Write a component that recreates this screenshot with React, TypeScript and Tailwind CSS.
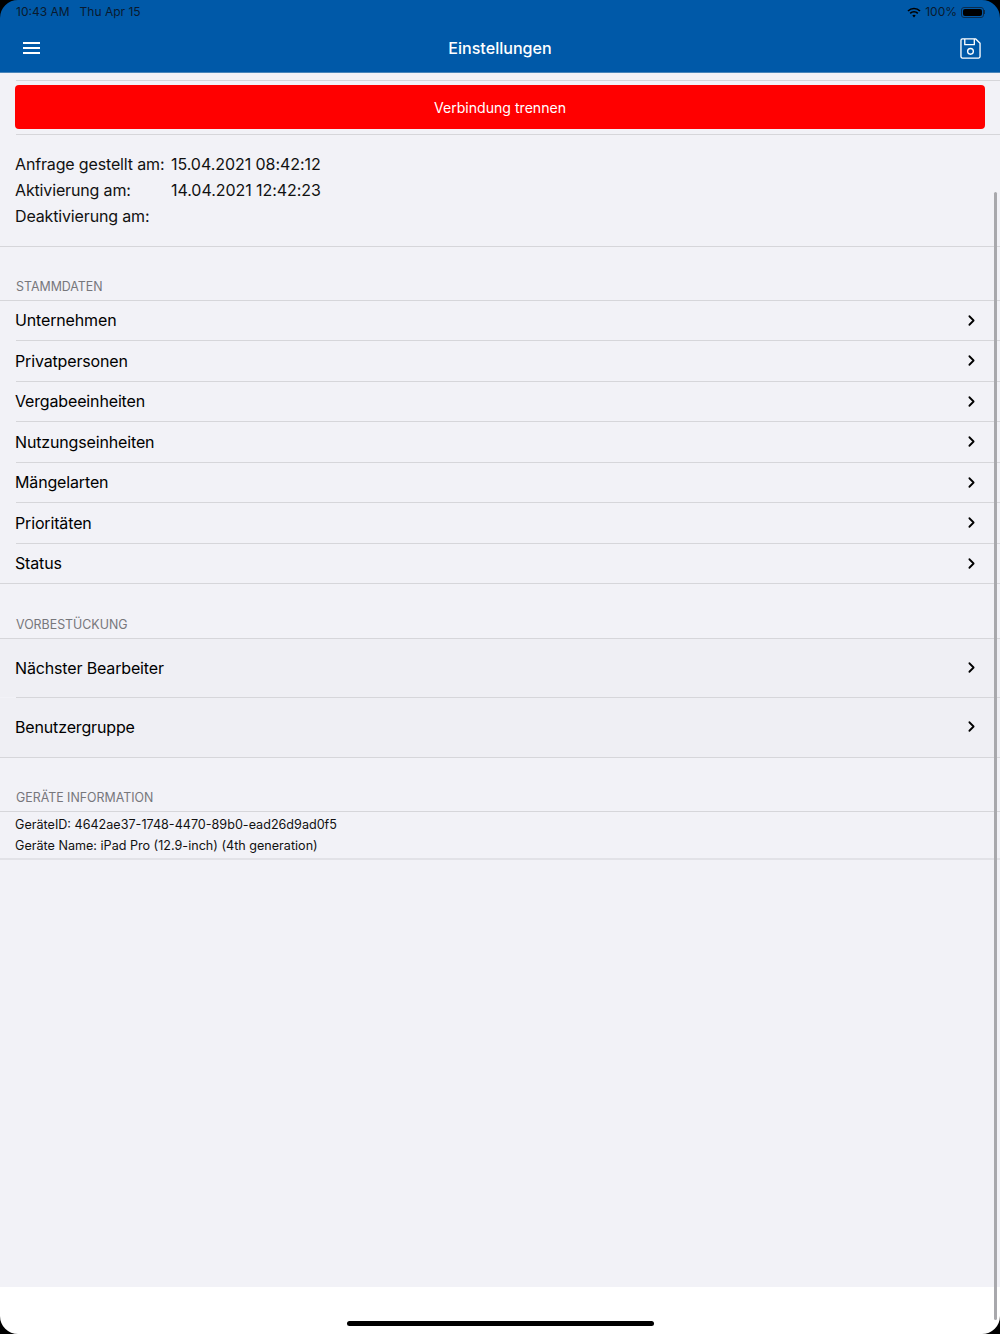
import { ChevronRight } from 'lucide-react';

const stammdaten = ['Unternehmen', 'Privatpersonen', 'Vergabeeinheiten', 'Nutzungseinheiten', 'Mängelarten', 'Prioritäten', 'Status'];

function SectionTitle({ title, tall }: { title: string; tall?: boolean }) {
  return (
    <div className={tall ? 'h-[55px] border-b border-[#d6d6da] pl-4 pt-[33px] text-[12.4px] leading-[15px] text-[#77777c]' : 'h-[54px] border-b border-[#d6d6da] pl-4 pt-[32px] text-[12.4px] leading-[15px] text-[#77777c]'}>
      {title}
    </div>
  );
}

function Row({ label, last }: { label: string; last?: boolean }) {
  return (
    <>
      <div className="flex h-[39.5px] items-center justify-between pl-[15px] pr-[20px] text-[16px] tracking-[-0.15px] text-black">
        <span>{label}</span>
        <ChevronRight size={17} strokeWidth={2.5} />
      </div>
      <div className={last ? 'border-t border-[#d6d6da]' : 'ml-4 border-t border-[#d6d6da]'} />
    </>
  );
}

function LargeRow({ label, last }: { label: string; last?: boolean }) {
  return (
    <div className={last ? 'flex h-[59.500px] items-center justify-between bg-[#efeff4] pb-px pl-[15px] pr-[20px] text-[16px] tracking-[-0.15px] text-black' : 'flex h-[57.500px] items-center justify-between bg-[#efeff4] pl-[15px] pr-[20px] text-[16px] tracking-[-0.15px] text-black'}>
      <span>{label}</span>
      <ChevronRight size={17} strokeWidth={2.5} />
    </div>
  );
}

export default function App() {
  return (
    <div className="relative flex h-[1334px] w-[1000px] flex-col overflow-hidden bg-white font-['Inter',sans-serif]">
      <header className="h-[73px] shrink-0 border-b border-[#4a86bb] bg-[#0059a8] text-white">
        <div className="flex h-[24px] items-center justify-between pl-4 pr-[15px] text-[12px] text-[#0a1a2e]">
          <div className="flex gap-[10px]">
            <span>10:43 AM</span>
            <span>Thu Apr 15</span>
          </div>
          <div className="flex items-center gap-[4px]">
            <svg width="14" height="11" viewBox="0 0 14 11" fill="none" stroke="#000" strokeWidth="1.7">
              <path d="M1 4a8.500 8.500 0 0 1 12 0" />
              <path d="M3.200 6.300a5.400 5.400 0 0 1 7.600 0" />
              <path d="M7 10.500 5.300 8.600a2.400 2.400 0 0 1 3.400 0Z" fill="#000" stroke="none" />
            </svg>
            <span>100%</span>
            <div className="flex items-center">
              <div className="h-[11px] w-[23px] rounded-[3px] border border-[#0b2c4d] p-px">
                <div className="h-full w-full rounded-[2px] bg-black" />
              </div>
              <div className="h-[4px] w-[1px] bg-[#0b2c4d]" />
            </div>
          </div>
        </div>
        <div className="flex h-[48px] items-center justify-between pl-[23px] pr-[19px]">
          <div className="-mt-px flex h-[12px] w-[17px] flex-col justify-between">
            <div className="h-[2px] bg-white" />
            <div className="h-[2px] bg-white" />
            <div className="h-[2px] bg-white" />
          </div>
          <span className="text-[16.100px] font-medium">Einstellungen</span>
          <svg width="21" height="21" viewBox="0 0 22 22" fill="none" stroke="white" strokeWidth="1.4" strokeLinejoin="round">
            <path d="M2.500 1h14l4.500 4.500v14a1.500 1.500 0 0 1-1.500 1.500h-17A1.500 1.500 0 0 1 1 19.500v-17A1.500 1.500 0 0 1 2.500 1Z" />
            <path d="M5 1v6h10V1" />
            <circle cx="11" cy="14" r="3" />
          </svg>
        </div>
      </header>

      <main className="flex-1 bg-[#f2f2f7]">
        <div className="ml-4 mt-[7px] border-t border-[#d6d6da]" />
        <div className="px-[15px] pb-[5px] pt-[4px]">
          <button className="h-[44px] w-full rounded-[4px] bg-[#ff0000] pt-px text-[14.100px] text-white">Verbindung trennen</button>
        </div>
        <div className="ml-4 border-t border-[#d6d6da]" />
        <div className="grid h-[111.500px] grid-cols-[156px_1fr] content-start border-b border-[#d6d6da] pl-[15px] pt-[16px] text-[16px] leading-[26px] tracking-[-0.15px] text-[#111]">
          <span>Anfrage gestellt am:</span>
          <span className="tracking-[-0.05px]">15.04.2021 08:42:12</span>
          <span>Aktivierung am:</span>
          <span className="tracking-[-0.05px]">14.04.2021 12:42:23</span>
          <span>Deaktivierung am:</span>
        </div>

        <SectionTitle title="STAMMDATEN" />
        {stammdaten.map((label, i) => (
          <Row key={label} label={label} last={i === stammdaten.length - 1} />
        ))}

        <SectionTitle title="VORBESTÜCKUNG" tall />
        <LargeRow label="Nächster Bearbeiter" />
        <div className="ml-4 border-t border-[#d6d6da]" />
        <LargeRow label="Benutzergruppe" last />
        <div className="border-t border-[#d6d6da]" />

        <SectionTitle title="GERÄTE INFORMATION" />
        <div className="h-[48px] border-b-2 border-[#e2e2e7] pl-[15px] pt-[2px] text-[12.600px] leading-[21px] text-[#111]">
          <div>GeräteID: 4642ae37-1748-4470-89b0-ead26d9ad0f5</div>
          <div>Geräte Name: iPad Pro (12.9-inch) (4th generation)</div>
        </div>
      </main>

      <div className="flex h-[47px] shrink-0 items-end justify-center bg-white pb-[8px]">
        <div className="h-[5px] w-[307px] rounded-full bg-black" />
      </div>

      {/* overlays: scroll indicator and the rounded screen corners */}
      <div className="absolute left-[994px] top-[192px] h-[1128px] w-[3px] rounded-full bg-[#a8a8ac]" />
      <svg className="absolute left-0 top-0" width="18" height="18"><path d="M0 0h18A18 18 0 0 0 0 18Z" fill="#000" /></svg>
      <svg className="absolute right-0 top-0" width="18" height="18"><path d="M18 0H0a18 18 0 0 1 18 18Z" fill="#000" /></svg>
      <svg className="absolute bottom-0 right-0" width="18" height="18"><path d="M18 18V0A18 18 0 0 1 0 18Z" fill="#000" /></svg>
      <svg className="absolute bottom-0 left-0" width="18" height="18"><path d="M0 18V0a18 18 0 0 0 18 18Z" fill="#000" /></svg>
    </div>
  );
}
